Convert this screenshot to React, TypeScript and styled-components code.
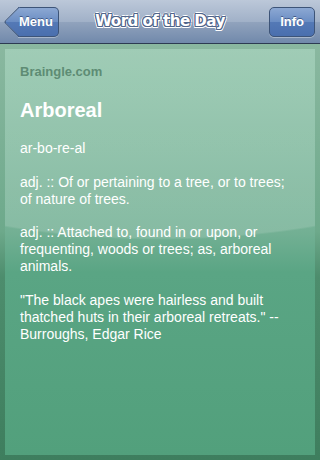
import styled, { createGlobalStyle } from "styled-components";

const GlobalStyle = createGlobalStyle`
  html, body {
    margin: 0;
    padding: 0;
    width: 320px;
    height: 460px;
    overflow: hidden;
    font-family: "Liberation Sans", Arial, sans-serif;
  }
`;

const Screen = styled.div`
  width: 320px;
  height: 460px;
  display: flex;
  flex-direction: column;
  background: #3e7e5e;
`;

const NavBar = styled.header`
  height: 43px;
  flex: 0 0 auto;
  display: flex;
  align-items: center;
  padding: 0 5px;
  background: linear-gradient(#bcc8d9 0%, #a1b1c8 50%, #91a3bd 51%, #7189ab 100%);
  border-bottom: 1px solid #2d3b52;
  box-sizing: content-box;
`;

const Side = styled.div<{ $end?: boolean }>`
  flex: 0 0 56px;
  display: flex;
  justify-content: ${(p) => (p.$end ? "flex-end" : "flex-start")};
`;

const NavButton = styled.button<{ $back?: boolean }>`
  position: relative;
  height: 30px;
  padding: ${(p) => (p.$back ? "0 5px 0 0" : "0 10px")};
  margin-left: ${(p) => (p.$back ? "13px" : "0")};
  border: 1px solid #3d5478;
  border-radius: ${(p) => (p.$back ? "0 5px 5px 0" : "5px")};
  border-left-color: ${(p) => (p.$back ? "transparent" : "#3d5478")};
  background: linear-gradient(#8ca8d3 0%, #6a8dc3 50%, #5479b6 51%, #4a6fae 100%);
  color: #fff;
  font-family: "Liberation Sans", Arial, sans-serif;
  font-weight: bold;
  font-size: 13px;
  text-shadow: 0 -1px 0 rgba(30, 50, 90, 0.6);
  box-shadow: 0 1px 0 rgba(255, 255, 255, 0.35);
  cursor: pointer;

  &::before {
    content: "";
    display: ${(p) => (p.$back ? "block" : "none")};
    position: absolute;
    left: -11px;
    top: 3px;
    width: 21px;
    height: 21px;
    transform: rotate(45deg);
    border-left: 1px solid #3d5478;
    border-bottom: 1px solid #3d5478;
    border-radius: 0 0 0 3px;
    background: linear-gradient(135deg, #8ca8d3 0%, #6a8dc3 50%, #5479b6 51%, #4a6fae 100%);
  }

  span {
    position: relative;
  }
`;

const Title = styled.h1`
  flex: 1 1 auto;
  margin: 0 0 2px;
  text-align: center;
  font-family: "DejaVu Sans", "Liberation Sans", sans-serif;
  font-weight: bold;
  font-size: 15.2px;
  letter-spacing: -0.6px;
  color: #fff;
  text-shadow:
    1px 0 0 #50658a, -1px 0 0 #50658a, 0 1px 0 #50658a, 0 -1px 0 #50658a,
    1px 1px 0 #50658a, -1px -1px 0 #50658a, 1px -1px 0 #50658a, -1px 1px 0 #50658a,
    2px 0 0 #fff, -2px 0 0 #fff, 0 2px 0 #fff, 0 -2px 0 #fff,
    1.5px 1.5px 0 #fff, -1.5px -1.5px 0 #fff, 1.5px -1.5px 0 #fff, -1.5px 1.5px 0 #fff;
`;

const Body = styled.main`
  flex: 1 1 auto;
  display: flex;
  padding: 5px;
  background: linear-gradient(#8ab8a0 0%, #6da98b 45%, #4d8d6d 56%, #3e7e5e 100%);
`;

const Panel = styled.section`
  flex: 1 1 auto;
  padding: 14px 15px;
  background:
    radial-gradient(ellipse 140% 47% at 50% 0%, rgba(255, 255, 255, 0.14) 99%, transparent 100%),
    linear-gradient(#90c4aa 0%, #73b094 45%, #5aa584 55%, #52a07c 100%);
  color: #fff;
  font-family: "Liberation Sans", Arial, sans-serif;
  font-size: 14px;
  line-height: 17px;
`;

const Source = styled.div`
  font-weight: bold;
  font-size: 13px;
  color: #5e8c74;
  margin-bottom: 18px;
`;

const Word = styled.h2`
  margin: 0 0 18px;
  font-size: 20px;
  font-weight: bold;
  line-height: 24px;
`;

const Para = styled.p`
  margin: 0 0 16.6px;
`;

export default function App() {
  return (
    <>
      <GlobalStyle />
      <Screen>
        <NavBar>
          <Side>
            <NavButton $back>
              <span>Menu</span>
            </NavButton>
          </Side>
          <Title>Word of the Day</Title>
          <Side $end>
            <NavButton>
              <span>Info</span>
            </NavButton>
          </Side>
        </NavBar>
        <Body>
          <Panel>
            <Source>Braingle.com</Source>
            <Word>Arboreal</Word>
            <Para>ar-bo-re-al</Para>
            <Para>adj. :: Of or pertaining to a tree, or to trees; of nature of trees.</Para>
            <Para>
              adj. :: Attached to, found in or upon, or frequenting, woods or trees; as, arboreal
              animals.
            </Para>
            <Para>
              "The black apes were hairless and built thatched huts in their arboreal retreats." --
              Burroughs, Edgar Rice
            </Para>
          </Panel>
        </Body>
      </Screen>
    </>
  );
}
